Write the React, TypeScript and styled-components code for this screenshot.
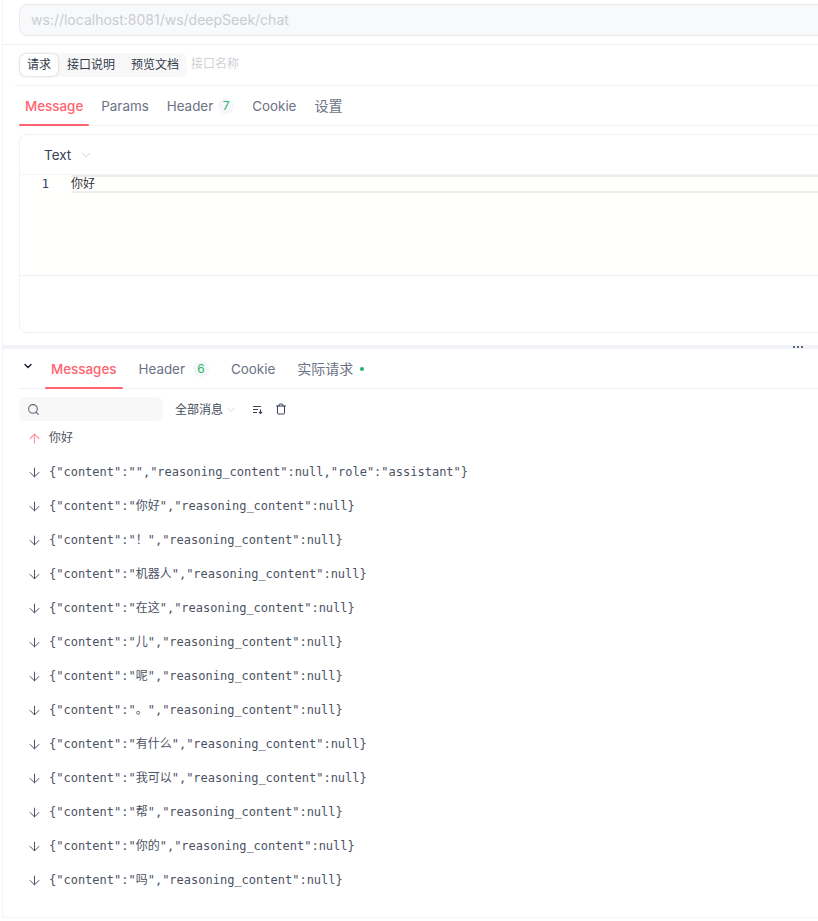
import React from "react";
import styled, { createGlobalStyle } from "styled-components";
import { ArrowDown, ArrowUp, ChevronDown, Search, Trash } from "lucide-react";

const Global = createGlobalStyle`
  html, body { margin: 0; padding: 0; background: #fff; }
  * { box-sizing: border-box; }
`;
const sans = `Inter, "Noto Sans CJK SC", sans-serif`;
const mono = `"DejaVu Sans Mono", "Noto Sans CJK SC", monospace`;

const Page = styled.div`
  width: 818px; height: 921px; overflow: hidden; background: #fff;
  font-family: ${sans}; padding-left: 2px;
`;
const Shell = styled.div`
  width: 900px; height: 918px; border-left: 1px solid #f3f4f6; border-bottom: 1px solid #f3f4f6;
  display: flex; flex-direction: column;
`;
const UrlBar = styled.div`
  height: 45px; padding: 4px 0 0 16px; border-bottom: 1px solid #f1f2f4; flex: none;
`;
const UrlInput = styled.div`
  height: 32px; background: #f8f9fb; border: 1px solid #e9ebef; border-radius: 8px;
  padding-left: 11px; font-size: 14px; line-height: 30px; color: #c9ccd3;
`;
const ModeRow = styled.div`
  margin-left: 12px; height: 41px; border-bottom: 1px solid #f1f2f4; flex: none;
  display: flex; align-items: center; gap: 4px; padding: 0 0 0 4px;
`;
const Segmented = styled.div`
  height: 24px; background: #f8f8f9; border-radius: 6px; display: flex; align-items: center;
`;
const Segment = styled.div<{ $active?: boolean }>`
  font-size: 12px; color: #333a4a; line-height: 22px;
  padding: 0 ${p => (p.$active ? 7 : 8)}px;
  ${p => p.$active ? "height:22px; margin: 0 1px; background:#fff; border-radius:6px; box-shadow:0 0 3px rgba(0,0,0,.2);" : ""}
`;
const NameHint = styled.span`
  font-size: 12px; line-height: 20px; color: #cfd1d6; position: relative; top: -1px;
`;
const TabBar = styled.div`
  height: 40px; margin-left: 16px; border-bottom: 1px solid #f1f2f4; flex: none;
  display: flex; align-items: stretch; gap: 6px;
`;
const Tab = styled.div<{ $active?: boolean; $cjk?: boolean }>`
  padding: 0 6px; display: flex; align-items: center;
  font-size: ${p => (p.$cjk ? 14 : 13.4)}px; line-height: 20px; white-space: nowrap; position: relative;
  color: ${p => (p.$active ? "#ff6370" : "#6b7285")}; font-weight: ${p => (p.$active ? 500 : 400)};
  ${p => p.$active ? `&::after { content: ""; position: absolute; left: 0; right: 0; bottom: -1px; height: 2px; background: #ff6370; border-radius: 1px; }` : ""}
`;
const Count = styled.span<{ $ml: number }>`
  width: 16px; height: 16px; border-radius: 50%; background: #f6f7f8; color: #2fb56f;
  font-size: 12px; line-height: 16px; text-align: center; margin-left: ${p => p.$ml}px;
`;
const Dot = styled.span`
  width: 4px; height: 4px; border-radius: 50%; background: #1cb56b; margin-left: 7px;
`;
const Card = styled.div`
  margin: 8px 0 0 16px; height: 199px; border: 1px solid #f1f2f4; border-radius: 8px; flex: none;
  display: flex; flex-direction: column;
`;
const TypeRow = styled.div`
  height: 39px; flex: none; display: flex; align-items: center; padding-left: 24px; gap: 8px;
  font-size: 13.5px; line-height: 18px; color: #3a4257;
`;
const EditorArea = styled.div`
  height: 102px; flex: none; background: #fffffd; display: flex; border-top: 1px solid #f4f4f4; border-bottom: 1px solid #f1f1ef;
`;
const Gutter = styled.div`
  width: 51px; flex: none; padding: 2px 22px 0 0; text-align: right;
  font-family: ${mono}; font-size: 12px; line-height: 15px; color: #2c3a6b;
`;
const ActiveLine = styled.div`
  flex: 1; height: 18px; border-top: 2px solid #eeeeee; border-bottom: 2px solid #eeeeee;
  font-family: ${mono}; font-size: 12px; line-height: 14px; color: #333;
`;
const Splitter = styled.div`
  margin-top: 12px; height: 4px; background: #f2f3f6; flex: none; position: relative;
`;
const Grip = styled.div`
  position: absolute; left: 790px; top: 0; width: 11px; height: 4px; display: flex; gap: 2px; align-items: center;
  span { width: 2px; height: 2px; background: #5f6780; }
`;
const RespTabs = styled.div`
  height: 40px; margin-left: 16px; border-bottom: 1px solid #f1f2f4; flex: none; display: flex; align-items: stretch;
`;
const Collapse = styled.div`
  width: 26px; padding-right: 9px; display: flex; align-items: center; justify-content: center; color: #1e2433; padding-bottom: 5px;
`;
const TabsInner = styled.div`
  display: flex; gap: 10px;
`;
const Tools = styled.div`
  margin: 8px 0 0 16px; height: 24px; display: flex; align-items: center; flex: none;
`;
const SearchBox = styled.div`
  width: 144px; height: 24px; background: #f8f8f9; border-radius: 6px; display: flex; align-items: center; padding-left: 8px; color: #5d6478;
`;
const Filter = styled.div`
  margin-left: 12px; padding-top: 1px; display: flex; align-items: center; gap: 2px; font-size: 12px; line-height: 18px; color: #444b5c;
  svg { color: #d4d6db; }
`;
const IconBtn = styled.div<{ $ml: number }>`
  margin-left: ${p => p.$ml}px; display: flex; align-items: center; color: #3a4257;
`;
const List = styled.div`
  flex: none; padding-left: 16px;
`;
const Row = styled.div`
  height: 34px; display: flex; align-items: center; padding-left: 8px;
`;
const Arrow = styled.span<{ $up?: boolean }>`
  width: 15px; display: flex; color: ${p => (p.$up ? "#ff9aa2" : "#4b5263")};
`;
const Body = styled.span<{ $up?: boolean }>`
  margin-left: 7px; font-size: 12px; line-height: 18px; white-space: pre; color: #4b5263;
  font-family: ${p => (p.$up ? sans : mono)};
`;

const down = ["\"\",\"reasoning_content\":null,\"role\":\"assistant\"", ...["你好", "！", "机器人", "在这", "儿", "呢", "。", "有什么", "我可以", "帮", "你的", "吗"].map(s => `"${s}","reasoning_content":null`)];

export default function App() {
  return (
    <Page>
      <Global />
      <Shell>
        <UrlBar><UrlInput>ws://localhost:8081/ws/deepSeek/chat</UrlInput></UrlBar>
        <ModeRow>
          <Segmented>
            <Segment $active>请求</Segment>
            <Segment>接口说明</Segment>
            <Segment>预览文档</Segment>
          </Segmented>
          <NameHint>接口名称</NameHint>
        </ModeRow>
        <TabBar>
          <Tab $active>Message</Tab>
          <Tab>Params</Tab>
          <Tab>Header<Count $ml={5}>7</Count></Tab>
          <Tab>Cookie</Tab>
          <Tab $cjk>设置</Tab>
        </TabBar>
        <Card>
          <TypeRow>Text <ChevronDown size={14} strokeWidth={1.2} color="#b9bcc4" /></TypeRow>
          <EditorArea>
            <Gutter>1</Gutter>
            <ActiveLine>你好</ActiveLine>
          </EditorArea>
        </Card>
        <Splitter><Grip><span /><span /><span /></Grip></Splitter>
        <RespTabs>
          <Collapse><ChevronDown size={12} strokeWidth={3} /></Collapse>
          <TabsInner>
            <Tab $active>Messages</Tab>
            <Tab>Header<Count $ml={8}>6</Count></Tab>
            <Tab>Cookie</Tab>
            <Tab $cjk>实际请求<Dot /></Tab>
          </TabsInner>
        </RespTabs>
        <Tools>
          <SearchBox><Search size={13} /></SearchBox>
          <Filter>全部消息 <ChevronDown size={12} /></Filter>
          <IconBtn $ml={15}>
            <svg width="11" height="11" viewBox="0 0 11 11" fill="none" stroke="currentColor" strokeWidth="1.1"><path d="M1 2.5h8M1 5.5h5M1 8.5h4" /><path d="M8.5 5.5v4M7 8l1.5 1.5L10 8" /></svg>
          </IconBtn>
          <IconBtn $ml={12}><Trash size={12} /></IconBtn>
        </Tools>
        <List>
          <Row><Arrow $up><ArrowUp size={15} strokeWidth={2} /></Arrow><Body $up>你好</Body></Row>
          {down.map(d => (
            <Row key={d}><Arrow><ArrowDown size={15} strokeWidth={1.6} /></Arrow><Body>{`{"content":${d}}`}</Body></Row>
          ))}
        </List>
      </Shell>
    </Page>
  );
}
